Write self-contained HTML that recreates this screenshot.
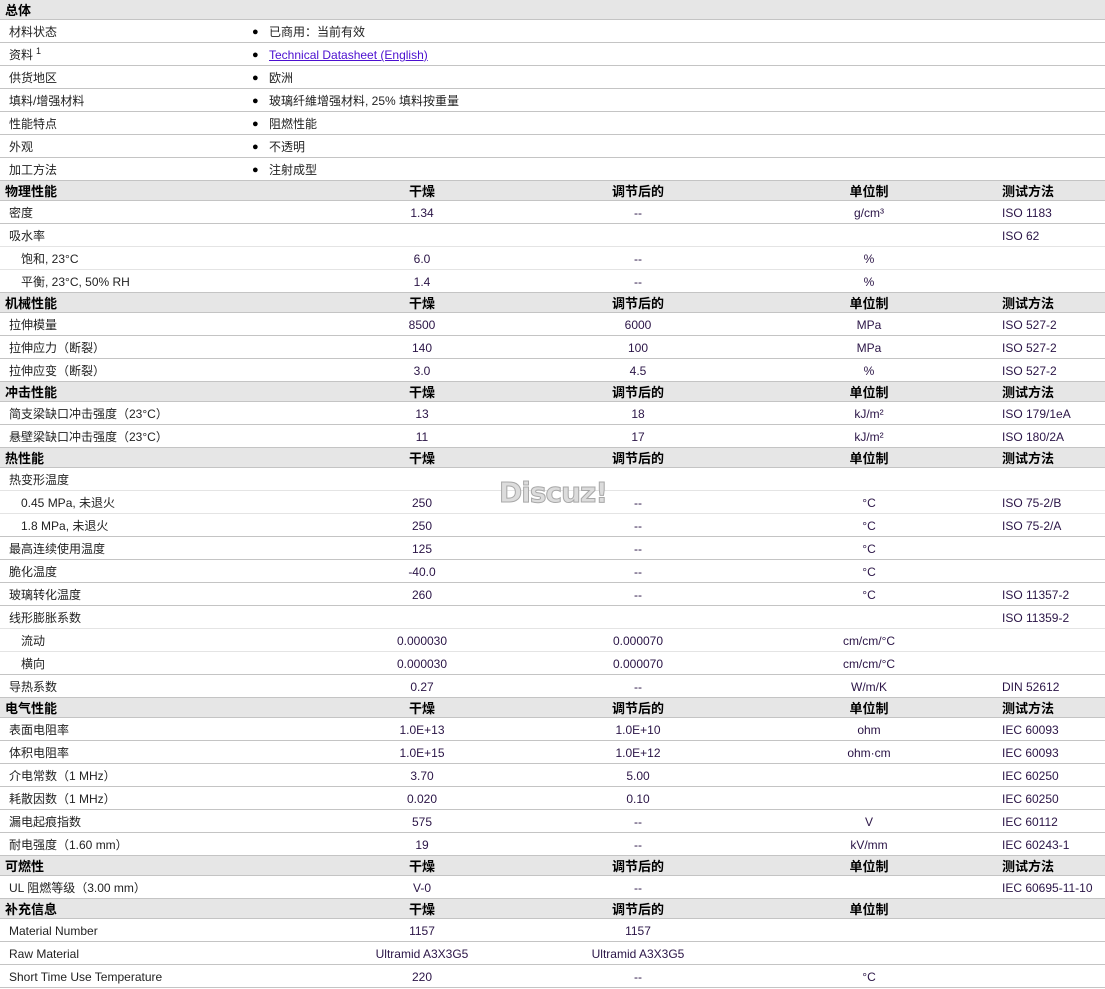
<!DOCTYPE html>
<html><head><meta charset="utf-8"><style>
*{margin:0;padding:0;box-sizing:border-box}
body{width:1105px;height:987px;overflow:hidden;background:#fff;font-family:"Liberation Sans","Noto Sans CJK SC",sans-serif;font-size:12px;color:#222}
.h,.r{position:relative;width:1105px;border-bottom:1px solid #c4c4c4}
.h{height:20px;background:#e6e6e6;font-weight:bold;font-size:13px;color:#000}
.r{height:23px;color:#2a1446}
.r.l{border-bottom-color:#e4e4e4}
.h span,.r span{position:absolute;top:0;line-height:21px;white-space:nowrap}
.r span{line-height:24px}
.a{left:5px}
.r .a{left:9px;color:#222}
.r .s{left:21px}
.b{left:322px;width:200px;text-align:center}
.c{left:538px;width:200px;text-align:center}
.d{left:769px;width:200px;text-align:center}
.e{left:1002px}
.bl{left:252px;color:#000;font-size:11px}
.v{left:269px;color:#222}
a{color:#4b0fd0;text-decoration:underline}
sup{font-size:9px;position:relative;top:-5px;margin-left:3px;vertical-align:baseline;line-height:0}
.wm{position:absolute;left:499px;top:476px;font:bold 28px "DejaVu Sans",sans-serif;color:#dcdcdc;-webkit-text-stroke:1px #a8a8a8;letter-spacing:-1px}
</style></head><body>
<div class="h"><span class="a">总体</span></div>
<div class="r"><span class="a">材料状态</span><span class="bl">●</span><span class="v">已商用：当前有效</span></div>
<div class="r"><span class="a">资料<sup>1</sup></span><span class="bl">●</span><span class="v"><a>Technical Datasheet (English)</a></span></div>
<div class="r"><span class="a">供货地区</span><span class="bl">●</span><span class="v">欧洲</span></div>
<div class="r"><span class="a">填料/增强材料</span><span class="bl">●</span><span class="v">玻璃纤維增强材料, 25% 填料按重量</span></div>
<div class="r"><span class="a">性能特点</span><span class="bl">●</span><span class="v">阻燃性能</span></div>
<div class="r"><span class="a">外观</span><span class="bl">●</span><span class="v">不透明</span></div>
<div class="r"><span class="a">加工方法</span><span class="bl">●</span><span class="v">注射成型</span></div>

<div class="h"><span class="a">物理性能</span><span class="b">干燥</span><span class="c">调节后的</span><span class="d">单位制</span><span class="e">测试方法</span></div>
<div class="r"><span class="a">密度</span><span class="b">1.34</span><span class="c">--</span><span class="d">g/cm³</span><span class="e">ISO 1183</span></div>
<div class="r l"><span class="a">吸水率</span><span class="e">ISO 62</span></div>
<div class="r l"><span class="a s">饱和, 23°C</span><span class="b">6.0</span><span class="c">--</span><span class="d">%</span></div>
<div class="r"><span class="a s">平衡, 23°C, 50% RH</span><span class="b">1.4</span><span class="c">--</span><span class="d">%</span></div>

<div class="h"><span class="a">机械性能</span><span class="b">干燥</span><span class="c">调节后的</span><span class="d">单位制</span><span class="e">测试方法</span></div>
<div class="r"><span class="a">拉伸模量</span><span class="b">8500</span><span class="c">6000</span><span class="d">MPa</span><span class="e">ISO 527-2</span></div>
<div class="r"><span class="a">拉伸应力（断裂）</span><span class="b">140</span><span class="c">100</span><span class="d">MPa</span><span class="e">ISO 527-2</span></div>
<div class="r"><span class="a">拉伸应变（断裂）</span><span class="b">3.0</span><span class="c">4.5</span><span class="d">%</span><span class="e">ISO 527-2</span></div>

<div class="h"><span class="a">冲击性能</span><span class="b">干燥</span><span class="c">调节后的</span><span class="d">单位制</span><span class="e">测试方法</span></div>
<div class="r"><span class="a">简支梁缺口冲击强度（23°C）</span><span class="b">13</span><span class="c">18</span><span class="d">kJ/m²</span><span class="e">ISO 179/1eA</span></div>
<div class="r"><span class="a">悬壁梁缺口冲击强度（23°C）</span><span class="b">11</span><span class="c">17</span><span class="d">kJ/m²</span><span class="e">ISO 180/2A</span></div>

<div class="h"><span class="a">热性能</span><span class="b">干燥</span><span class="c">调节后的</span><span class="d">单位制</span><span class="e">测试方法</span></div>
<div class="r l"><span class="a">热变形温度</span></div>
<div class="r l"><span class="a s">0.45 MPa, 未退火</span><span class="b">250</span><span class="c">--</span><span class="d">°C</span><span class="e">ISO 75-2/B</span></div>
<div class="r"><span class="a s">1.8 MPa, 未退火</span><span class="b">250</span><span class="c">--</span><span class="d">°C</span><span class="e">ISO 75-2/A</span></div>
<div class="r"><span class="a">最高连续使用温度</span><span class="b">125</span><span class="c">--</span><span class="d">°C</span></div>
<div class="r"><span class="a">脆化温度</span><span class="b">-40.0</span><span class="c">--</span><span class="d">°C</span></div>
<div class="r"><span class="a">玻璃转化温度</span><span class="b">260</span><span class="c">--</span><span class="d">°C</span><span class="e">ISO 11357-2</span></div>
<div class="r l"><span class="a">线形膨胀系数</span><span class="e">ISO 11359-2</span></div>
<div class="r l"><span class="a s">流动</span><span class="b">0.000030</span><span class="c">0.000070</span><span class="d">cm/cm/°C</span></div>
<div class="r"><span class="a s">横向</span><span class="b">0.000030</span><span class="c">0.000070</span><span class="d">cm/cm/°C</span></div>
<div class="r"><span class="a">导热系数</span><span class="b">0.27</span><span class="c">--</span><span class="d">W/m/K</span><span class="e">DIN 52612</span></div>

<div class="h"><span class="a">电气性能</span><span class="b">干燥</span><span class="c">调节后的</span><span class="d">单位制</span><span class="e">测试方法</span></div>
<div class="r"><span class="a">表面电阻率</span><span class="b">1.0E+13</span><span class="c">1.0E+10</span><span class="d">ohm</span><span class="e">IEC 60093</span></div>
<div class="r"><span class="a">体积电阻率</span><span class="b">1.0E+15</span><span class="c">1.0E+12</span><span class="d">ohm·cm</span><span class="e">IEC 60093</span></div>
<div class="r"><span class="a">介电常数（1 MHz）</span><span class="b">3.70</span><span class="c">5.00</span><span class="e">IEC 60250</span></div>
<div class="r"><span class="a">耗散因数（1 MHz）</span><span class="b">0.020</span><span class="c">0.10</span><span class="e">IEC 60250</span></div>
<div class="r"><span class="a">漏电起痕指数</span><span class="b">575</span><span class="c">--</span><span class="d">V</span><span class="e">IEC 60112</span></div>
<div class="r"><span class="a">耐电强度（1.60 mm）</span><span class="b">19</span><span class="c">--</span><span class="d">kV/mm</span><span class="e">IEC 60243-1</span></div>

<div class="h"><span class="a">可燃性</span><span class="b">干燥</span><span class="c">调节后的</span><span class="d">单位制</span><span class="e">测试方法</span></div>
<div class="r"><span class="a">UL 阻燃等级（3.00 mm）</span><span class="b">V-0</span><span class="c">--</span><span class="e">IEC 60695-11-10</span></div>

<div class="h"><span class="a">补充信息</span><span class="b">干燥</span><span class="c">调节后的</span><span class="d">单位制</span></div>
<div class="r"><span class="a">Material Number</span><span class="b">1157</span><span class="c">1157</span></div>
<div class="r"><span class="a">Raw Material</span><span class="b">Ultramid A3X3G5</span><span class="c">Ultramid A3X3G5</span></div>
<div class="r"><span class="a">Short Time Use Temperature</span><span class="b">220</span><span class="c">--</span><span class="d">°C</span></div>

<div class="wm">Discuz!</div>
</body></html>
